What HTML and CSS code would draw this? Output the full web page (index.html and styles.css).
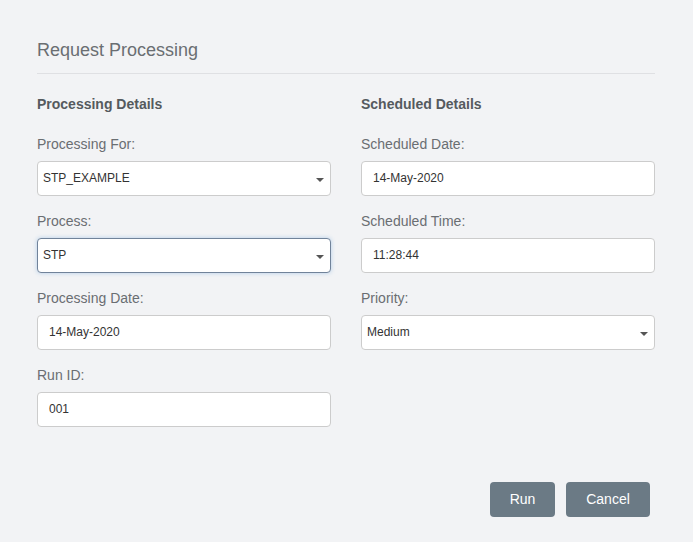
FILE: index.html
```html
<!DOCTYPE html>
<html>
<head>
<meta charset="utf-8">
<link rel="stylesheet" href="styles.css">
</head>
<body>
<div class="page">
  <div class="title">Request Processing</div>
  <div class="cols">
    <div class="col">
      <div class="section">Processing Details</div>
      <div class="field">
        <div class="label">Processing For:</div>
        <div class="input select"><span>STP_EXAMPLE</span><span class="caret"></span></div>
      </div>
      <div class="field">
        <div class="label">Process:</div>
        <div class="input select focus"><span>STP</span><span class="caret"></span></div>
      </div>
      <div class="field">
        <div class="label">Processing Date:</div>
        <div class="input">14-May-2020</div>
      </div>
      <div class="field">
        <div class="label">Run ID:</div>
        <div class="input">001</div>
      </div>
    </div>
    <div class="col">
      <div class="section">Scheduled Details</div>
      <div class="field">
        <div class="label">Scheduled Date:</div>
        <div class="input">14-May-2020</div>
      </div>
      <div class="field">
        <div class="label">Scheduled Time:</div>
        <div class="input">11:28:44</div>
      </div>
      <div class="field">
        <div class="label">Priority:</div>
        <div class="input select"><span>Medium</span><span class="caret"></span></div>
      </div>
    </div>
  </div>
  <div class="actions">
    <button class="btn btn-run">Run</button>
    <button class="btn btn-cancel">Cancel</button>
  </div>
</div>
</body>
</html>
```
FILE: styles.css
```css
html, body {
  margin: 0;
  padding: 0;
  background: #f2f3f5;
  font-family: "Liberation Sans", Arial, sans-serif;
}
.page {
  width: 618px;
  padding: 40px 0 0 37px;
}
.title {
  font-size: 18px;
  line-height: 20px;
  color: #6a6e72;
  padding-bottom: 13px;
  border-bottom: 1px solid #dfe0e3;
}
.cols {
  display: grid;
  grid-template-columns: 294px 294px;
  column-gap: 30px;
  margin-top: 22px;
}
.section {
  font-size: 14px;
  line-height: 16px;
  font-weight: bold;
  color: #555a5e;
  margin-bottom: 23px;
}
.field {
  margin-bottom: 16px;
}
.label {
  font-size: 14px;
  line-height: 18px;
  color: #6a6e72;
  margin-bottom: 8px;
}
.input {
  box-sizing: border-box;
  height: 35px;
  background: #fff;
  border: 1px solid #cccccc;
  border-radius: 4px;
  font-size: 12px;
  color: #333;
  padding: 0 11px 2px;
  display: flex;
  align-items: center;
}
.input.select {
  padding: 0 6px 2px 5px;
  justify-content: space-between;
}
.input.focus {
  border-color: #71839a;
  box-shadow: 0 0 4px rgba(102, 160, 220, 0.45);
}
.caret {
  width: 0;
  height: 0;
  border-left: 4px solid transparent;
  border-right: 4px solid transparent;
  border-top: 4px solid #555;
  margin-top: 4px;
}
.actions {
  display: flex;
  justify-content: flex-end;
  gap: 11px;
  padding-right: 5px;
  margin-top: 39px;
}
.btn {
  height: 35px;
  border: none;
  border-radius: 4px;
  background: #6b7a85;
  color: #fff;
  font-family: "Liberation Sans", Arial, sans-serif;
  font-size: 14px;
  line-height: 16px;
  padding: 0 0 2px;
}
.btn-run { width: 65px; }
.btn-cancel { width: 84px; }
```
